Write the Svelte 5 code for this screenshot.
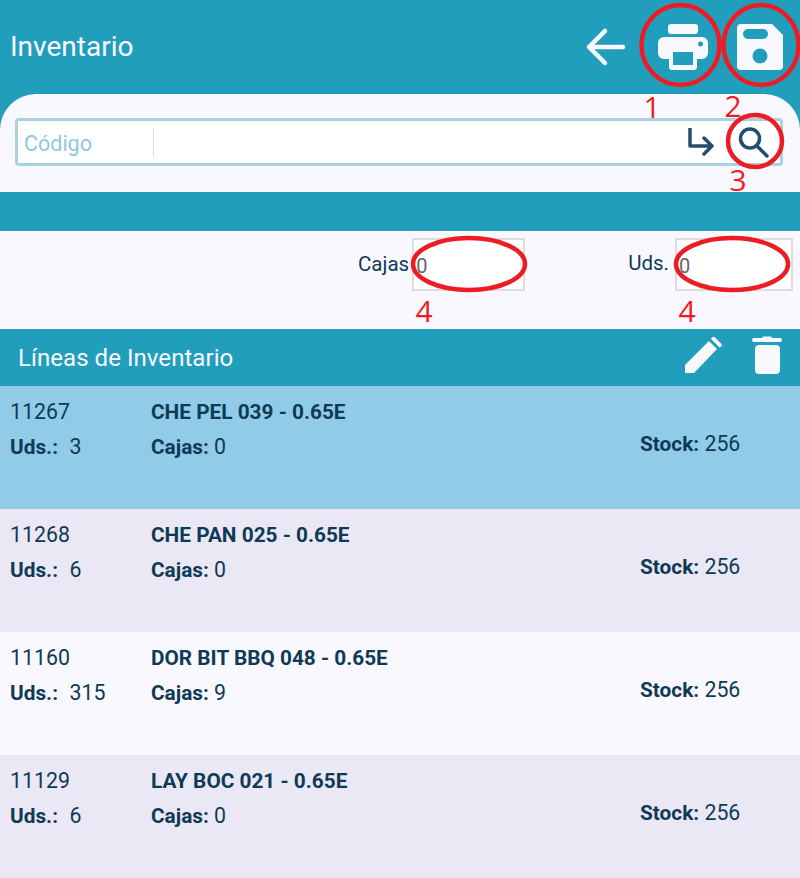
<script>
	let lines = [
		{ code: '11267', name: 'CHE PEL 039 - 0.65E', uds: 3, cajas: 0, stock: 256 },
		{ code: '11268', name: 'CHE PAN 025 - 0.65E', uds: 6, cajas: 0, stock: 256 },
		{ code: '11160', name: 'DOR BIT BBQ 048 - 0.65E', uds: 315, cajas: 9, stock: 256 },
		{ code: '11129', name: 'LAY BOC 021 - 0.65E', uds: 6, cajas: 0, stock: 256 }
	];

	let marks = [
		{ label: '1', x: 652, y: 107 },
		{ label: '2', x: 733, y: 106 },
		{ label: '3', x: 738, y: 180 },
		{ label: '4', x: 424, y: 311 },
		{ label: '4', x: 687, y: 311 }
	];
</script>

<main class="page">
	<header class="top">
		<h1>Inventario</h1>
		<div class="actions">
			<svg class="back" viewBox="0 0 42 42" width="42" height="42">
				<path d="M38 21H4M20 5 4 21l16 16" fill="none" stroke="#faf8ff" stroke-width="4.5" stroke-linecap="round" stroke-linejoin="round" />
			</svg>
			<svg class="print" viewBox="0 0 50 46" width="50" height="46">
				<rect x="10" y="0" width="30" height="10" rx="3" fill="#faf8ff" />
				<rect x="0" y="13" width="50" height="22" rx="6" fill="#faf8ff" />
				<rect x="11" y="23" width="28" height="23" rx="3" fill="#faf8ff" />
				<rect x="15" y="28" width="20" height="13" fill="#229ebd" />
				<circle cx="42.5" cy="20" r="2.5" fill="#229ebd" />
			</svg>
			<svg class="save" viewBox="0 0 46 46" width="46" height="46">
				<path d="M4 0H35L46 11V42a4 4 0 0 1-4 4H4a4 4 0 0 1-4-4V4a4 4 0 0 1 4-4Z" fill="#faf8ff" />
				<rect x="6" y="5" width="25" height="10" rx="5" fill="#229ebd" />
				<circle cx="23" cy="32" r="7.5" fill="#229ebd" />
			</svg>
		</div>
	</header>

	<section class="panel">
		<div class="search">
			<span class="placeholder">Código</span>
			<span class="divider"></span>
			<svg class="enter" viewBox="0 0 28 28" width="28" height="28">
				<path d="M3 2V20H25M17 12l8 8-8 8" transform="translate(0 -2)" fill="none" stroke="#234e70" stroke-width="3.500" stroke-linecap="round" stroke-linejoin="round" />
			</svg>
			<svg class="lens" viewBox="0 0 32 32" width="32" height="32">
				<circle cx="13" cy="12.500" r="9.500" fill="none" stroke="#234e70" stroke-width="3.500" />
				<path d="M20 20l10 10" stroke="#234e70" stroke-width="3.500" stroke-linecap="round" />
			</svg>
		</div>
	</section>

	<div class="bar"></div>

	<section class="totals">
		<div class="field cajas">
			<span>Cajas</span>
			<div class="box">0</div>
		</div>
		<div class="field uds">
			<span>Uds.</span>
			<div class="box">0</div>
		</div>
	</section>

	<header class="lines-head">
		<h2>Líneas de Inventario</h2>
		<div class="tools">
			<svg viewBox="0 0 38 38" width="38" height="38">
				<path d="M0 29 24 5l8 8-23 24H1a1 1 0 0 1-1-1ZM26 3l1-1.500a2 2 0 0 1 3 0l6 6a2 2 0 0 1 0 3L34.500 11.500Z" fill="#faf8ff" />
			</svg>
			<svg viewBox="0 0 30 38" width="30" height="38">
				<path d="M2 2h8l1-1.500h8L20 2h8a1.500 1.500 0 0 1 0 4H2a1.500 1.500 0 0 1 0-4Z" fill="#faf8ff" />
				<rect x="3" y="9" width="25" height="29" rx="4" fill="#faf8ff" />
			</svg>
		</div>
	</header>

	<ul class="lines">
		{#each lines as line, i}
			<li class:selected={i === 0} class:odd={i % 2 === 1}>
				<div class="col-a">
					<div>{line.code}</div>
					<div class="second"><b class="uds-label">Uds.:</b>&nbsp; {line.uds}</div>
				</div>
				<div class="col-b">
					<div><b>{line.name}</b></div>
					<div class="second"><b>Cajas:</b> {line.cajas}</div>
				</div>
				<div class="col-c"><b>Stock:</b> {line.stock}</div>
			</li>
		{/each}
	</ul>

	<!-- red marks drawn over the screenshot -->
	<svg class="marks" viewBox="0 0 800 878" width="800" height="878">
		<g fill="none" stroke="#ed1c24" stroke-width="4.500">
			<ellipse cx="680.500" cy="45" rx="39" ry="40" />
			<ellipse cx="761" cy="45" rx="37.500" ry="40" />
			<ellipse cx="755" cy="141" rx="27" ry="26" />
			<ellipse cx="469" cy="264" rx="56" ry="26" />
			<ellipse cx="732" cy="264" rx="56" ry="26" />
		</g>
	</svg>
	{#each marks as mark}
		<span class="mark" style="left: {mark.x}px; top: {mark.y}px">{mark.label}</span>
	{/each}
</main>

<style>
	:global(body) {
		margin: 0;
		background: #faf8ff;
	}

	.page {
		position: relative;
		width: 800px;
		height: 878px;
		overflow: hidden;
		font-family: Roboto, 'Liberation Sans', sans-serif;
		color: #0f3a56;
		background: #229ebd;
	}

	.top {
		height: 94px;
		display: flex;
		align-items: center;
		justify-content: space-between;
		padding: 0 17px 0 10px;
		box-sizing: border-box;
	}

	h1 {
		margin: 0 0 2px;
		font-size: 28px;
		font-weight: 400;
		color: #faf8ff;
	}

	.actions {
		display: flex;
		align-items: center;
	}

	.back {
		margin-right: 31px;
	}

	.print {
		margin-right: 29px;
	}

	.panel {
		height: 98px;
		background: #faf8ff;
		border-radius: 36px 36px 0 0;
		padding: 24px 17px 0 15px;
		box-sizing: border-box;
	}

	.search {
		height: 48px;
		box-sizing: border-box;
		display: flex;
		align-items: center;
		background: #fff;
		border: 3px solid #aad1e0;
		border-radius: 4px;
		padding-left: 6px;
	}

	.placeholder {
		width: 129px;
		font-size: 21.500px;
		padding-top: 3px;
		color: #90c8e0;
	}

	.divider {
		width: 1px;
		height: 29px;
		background: #d4dfe4;
	}

	.enter {
		margin-left: auto;
		margin-right: 22px;
	}

	.lens {
		margin-right: 11px;
	}

	.bar {
		height: 39px;
		background: #229ebd;
	}

	.totals {
		height: 98px;
		background: #faf8ff;
		display: flex;
		padding: 7px 7px 0 0;
		box-sizing: border-box;
		justify-content: flex-end;
		font-size: 20.500px;
	}

	.field {
		display: flex;
		height: 53px;
	}

	.field span {
		margin-right: 3px;
		line-height: 52px;
	}

	.field.uds span {
		margin-right: 6px;
		line-height: 50px;
	}

	.cajas {
		margin-right: 103px;
	}

	.box {
		width: 113px;
		height: 53px;
		box-sizing: border-box;
		background: #fff;
		border: 2px solid #dddddd;
		padding-left: 2px;
		line-height: 53px;
		font-size: 20px;
		color: #666;
	}

	.uds .box {
		width: 118px;
	}

	.lines-head {
		height: 57px;
		background: #229ebd;
		display: flex;
		align-items: center;
		justify-content: space-between;
		padding: 0 18px;
		box-sizing: border-box;
	}

	h2 {
		margin: 0;
		font-size: 24px;
		font-weight: 400;
		letter-spacing: 0.05px;
		color: #faf8ff;
	}

	.tools {
		display: flex;
		align-items: center;
		gap: 29px;
		padding-bottom: 6px;
	}

	.lines {
		list-style: none;
		margin: 0;
		padding: 0;
	}

	.lines li {
		height: 123px;
		box-sizing: border-box;
		display: flex;
		padding: 14px 0 0 10px;
		background: #faf8ff;
		font-size: 21.300px;
		line-height: 24px;
	}

	.lines li.odd {
		background: #ebe8f6;
	}

	.lines li.selected {
		background: #90cbe7;
	}

	.lines b {
		font-weight: 700;
		font-size: 20.800px;
	}

	.lines b.uds-label {
		margin-right: 1px;
	}

	.second {
		margin-top: 11px;
	}

	.col-a {
		width: 141px;
	}

	.col-b {
		width: 489px;
	}

	.col-c {
		padding-top: 32px;
	}

	.marks {
		position: absolute;
		left: 0;
		top: 0;
	}

	.mark {
		position: absolute;
		transform: translate(-50%, -50%);
		font-family: 'Open Sans', sans-serif;
		font-size: 30px;
		line-height: 1;
		color: #ed1c24;
	}
</style>
